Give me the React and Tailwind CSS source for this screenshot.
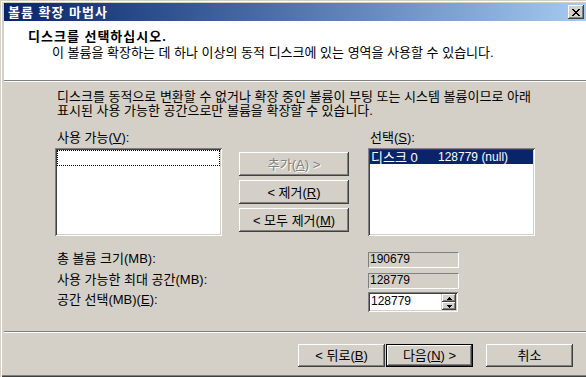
import React from 'react';

function Btn({ children, className = '', disabled = false }) {
  return (
    <div
      className={
        'flex items-center justify-center bg-[#d4d0c8] shadow-[inset_-1px_-1px_#404040,inset_1px_1px_#ffffff,inset_-2px_-2px_#808080,inset_2px_2px_#d4d0c8] ' +
        (disabled ? 'text-[#808080] [text-shadow:1px_1px_0_#ffffff] ' : '') +
        className
      }
    >
      {children}
    </div>
  );
}

function SpinArrow({ up }) {
  return (
    <svg width="5" height="3" viewBox="0 0 5 3" shapeRendering="crispEdges">
      {up ? <path d="M2 0h1v1h1v1h1v1H0V2h1V1h1z" fill="#000" /> : <path d="M0 0h5v1H4v1H3v1H2V2H1V1H0z" fill="#000" />}
    </svg>
  );
}

export default function App() {
  return (
    <div className="w-[586px] h-[377px] overflow-hidden bg-[#d4d0c8] font-['Liberation_Sans','Noto_Sans_CJK_KR',sans-serif] text-[13px] leading-[13px] text-black pl-[4px] pt-[3px] pb-[2px] flex flex-col shadow-[inset_1px_1px_#d4d0c8,inset_2px_2px_#ffffff,inset_0_-1px_#404040,inset_0_-2px_#808080]">
      {/* title bar */}
      <div className="h-[18px] shrink-0 flex items-center justify-between bg-linear-to-r from-[#0a246a] to-[#a6caf0] pl-[4px] pr-[2px]">
        <span className="text-white font-bold tracking-[1px]">볼륨 확장 마법사</span>
        <div className="w-[16px] h-[14px] flex items-center justify-center bg-[#d4d0c8] shadow-[inset_-1px_-1px_#404040,inset_1px_1px_#ffffff,inset_-2px_-2px_#808080,inset_2px_2px_#d4d0c8]">
          <svg width="8" height="7" viewBox="0 0 8 7" shapeRendering="crispEdges">
            <path d="M0 0h2v1h1v1h2V1h1V0h2v1H7v1H6v1H5v1h1v1h1v1h1v1H6V6H5V5H3v1H2v1H0V6h1V5h1V4h1V3H2V2H1V1H0z" fill="#000" />
          </svg>
        </div>
      </div>

      {/* header */}
      <div className="h-[59px] shrink-0 bg-white pl-[24px] pt-[9px]">
        <div className="font-bold tracking-[1px]">디스크를 선택하십시오.</div>
        <div className="pl-[24px] mt-[3px]">이 볼륨을 확장하는 데 하나 이상의 동적 디스크에 있는 영역을 사용할 수 있습니다.</div>
      </div>
      <div className="shrink-0 border-t border-b border-t-[#808080] border-b-white" />

      {/* body */}
      <div className="flex-1 flex flex-col pl-[51px] pt-[8px]">
        <p className="pl-[2px] leading-[14px]">
          디스크를 동적으로 변환할 수 없거나 확장 중인 볼륨이 부팅 또는 시스템 볼륨이므로 아래
          <br />
          표시된 사용 가능한 공간으로만 볼륨을 확장할 수 있습니다.
        </p>

        <div className="flex mt-[13px]">
          <div className="w-[313px] pl-[2px]">
            사용 가능(<u>V</u>):
          </div>
          <div className="pl-[2px]">
            선택(<u>S</u>):
          </div>
        </div>

        <div className="flex mt-[4px] h-[88px]">
          <div className="w-[167px] h-[88px] bg-white p-[2px] shadow-[inset_1px_1px_#808080,inset_-1px_-1px_#ffffff,inset_2px_2px_#404040,inset_-2px_-2px_#d4d0c8]">
            <div className="h-[16px] border border-dotted border-black" />
          </div>
          <div className="w-[110px] ml-[17px] mt-[4px] flex flex-col gap-[4px]">
            <Btn disabled className="h-[24px]">
              추가(<u>A</u>) &gt;
            </Btn>
            <Btn className="h-[24px]">
              &lt; 제거(<u>R</u>)
            </Btn>
            <Btn className="h-[24px]">
              &lt; 모두 제거(<u>M</u>)
            </Btn>
          </div>
          <div className="w-[167px] h-[88px] ml-[19px] bg-white p-[2px] shadow-[inset_1px_1px_#808080,inset_-1px_-1px_#ffffff,inset_2px_2px_#404040,inset_-2px_-2px_#d4d0c8]">
            <div className="h-[14px] flex items-center bg-[#0a246a] text-white pl-[1px]">
              <span className="w-[67px]">디스크 0</span>
              <span className="text-[12px]">128779 (null)</span>
            </div>
          </div>
        </div>

        <div className="flex items-start mt-[16px]">
          <div className="w-[313px] pl-[2px]">총 볼륨 크기(MB):</div>
          <div className="w-[91px] h-[16px] pl-[1px] text-[12px] border-t border-l border-t-[#808080] border-l-[#808080] border-b border-r border-b-white border-r-white">190679</div>
        </div>
        <div className="flex items-start mt-[5px]">
          <div className="w-[313px] pl-[2px]">사용 가능한 최대 공간(MB):</div>
          <div className="w-[91px] h-[16px] pl-[1px] text-[12px] border-t border-l border-t-[#808080] border-l-[#808080] border-b border-r border-b-white border-r-white">128779</div>
        </div>
        <div className="flex items-start mt-[3px]">
          <div className="w-[313px] pl-[2px] pt-[1px]">
            공간 선택(MB)(<u>E</u>):
          </div>
          <div className="w-[90px] h-[20px] p-[2px] flex bg-[#d4d0c8] shadow-[inset_1px_1px_#808080,inset_-1px_-1px_#ffffff,inset_2px_2px_#404040,inset_-2px_-2px_#d4d0c8]">
            <div className="flex-1 bg-white pl-[1px] pt-[1px] mr-[1px] text-[12px]">128779</div>
            <div className="w-[14px] flex flex-col">
              <Btn className="h-[8px]">
                <SpinArrow up />
              </Btn>
              <Btn className="h-[8px]">
                <SpinArrow />
              </Btn>
            </div>
          </div>
        </div>
      </div>

      {/* footer */}
      <div className="shrink-0 border-t border-b border-t-[#808080] border-b-white" />
      <div className="h-[42px] shrink-0 flex justify-end items-start pt-[11px] pr-[13px]">
        <Btn className="w-[87px] h-[23px]">
          &lt; 뒤로(<u>B</u>)
        </Btn>
        <div className="w-[87px] h-[23px] ml-[1px] border border-black flex">
          <Btn className="flex-1">
            다음(<u>N</u>) &gt;
          </Btn>
        </div>
        <Btn className="w-[87px] h-[23px] ml-[13px]">취소</Btn>
      </div>
    </div>
  );
}
